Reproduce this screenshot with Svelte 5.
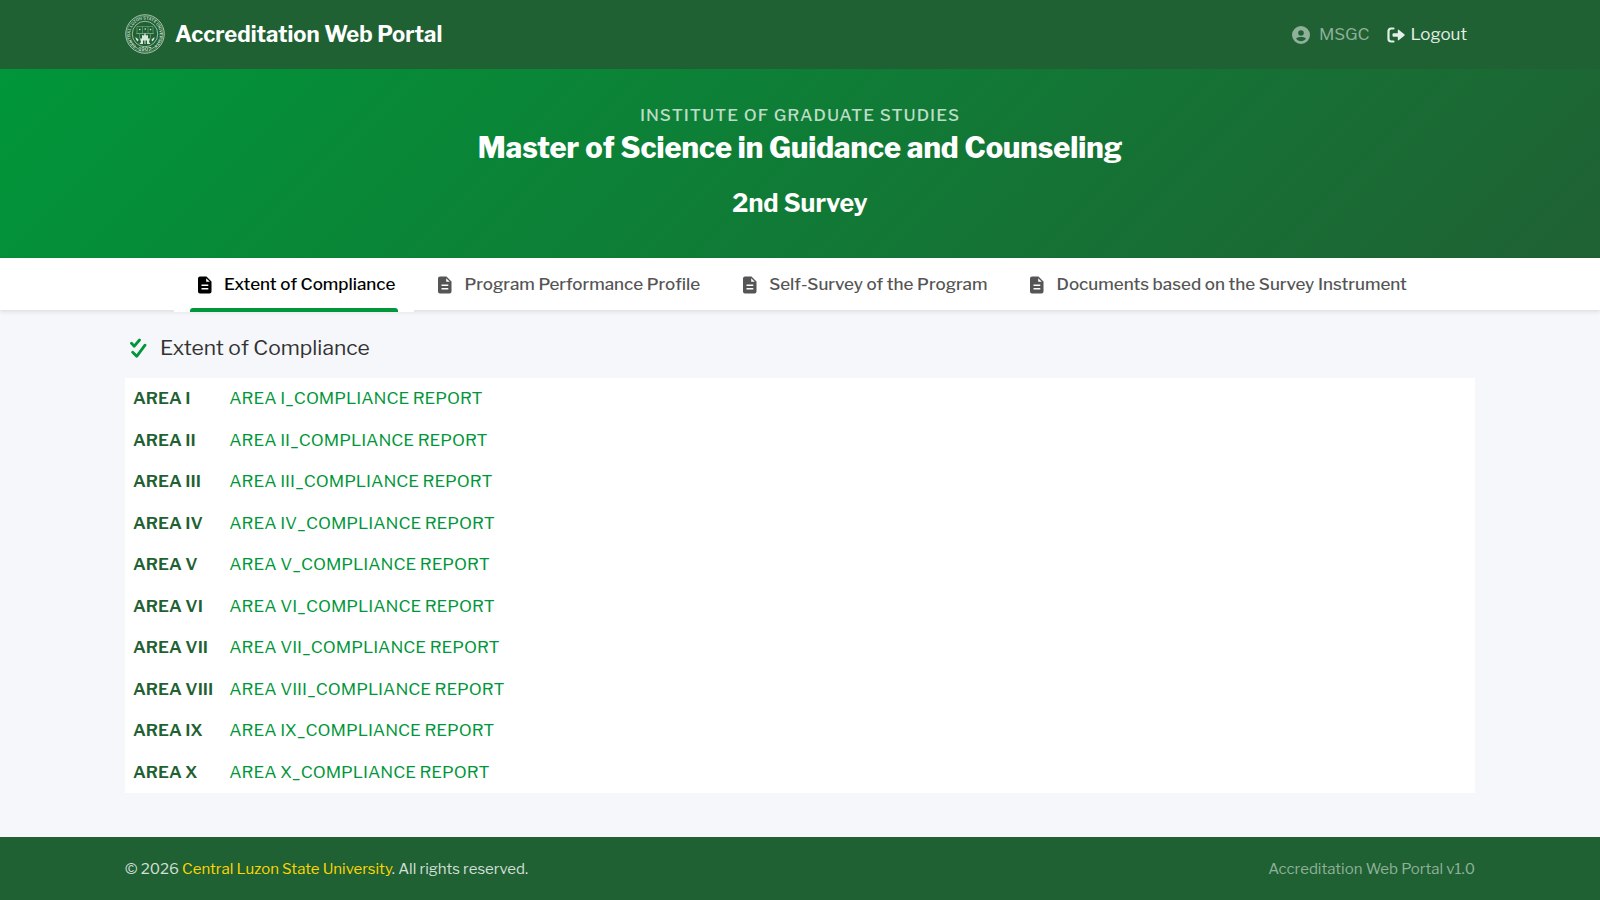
<script>
  const tabs = [
    'Extent of Compliance',
    'Program Performance Profile',
    'Self-Survey of the Program',
    'Documents based on the Survey Instrument'
  ];
  const areas = ['I', 'II', 'III', 'IV', 'V', 'VI', 'VII', 'VIII', 'IX', 'X'];
  let active = $state(0);
</script>

<div class="page">
  <header class="topbar">
    <div class="container bar">
      <a class="brand" href="#home">
        <svg class="seal" viewBox="0 0 80 80" aria-hidden="true">
          <defs>
            <path id="seal-ring" d="M20.500 62.500A29.500 29.500 0 1 1 59.500 62.500" />
          </defs>
          <g fill="none" stroke="#b5d0bc">
            <circle cx="40" cy="40" r="38.500" stroke-width="1.800" />
            <circle cx="40" cy="40" r="36" stroke-width=".8" />
            <circle cx="40" cy="40" r="25.500" stroke-width="1.600" />
            <path d="M11 54a32 32 0 0 0 18 17M69 54a32 32 0 0 1-18 17" stroke-width="1.600" />
          </g>
          <path d="M24 25h32v14H24zM35 25v14M46 25v14M22 39h36M29 39v10M51 39v10" fill="none" stroke="#8fb59a" stroke-width="1" />
          <text class="ring"><textPath href="#seal-ring" startOffset="50%" text-anchor="middle">CENTRAL LUZON STATE UNIVERSITY</textPath></text>
          <g fill="#d8e8dc">
            <path d="M40 37l2 6 4-1v7h4l-2 7 3 4H29l3-4-2-7h4v-7l4 1z" />
            <circle cx="29.500" cy="31" r="1.600" /><circle cx="40.500" cy="30" r="1.600" /><circle cx="51" cy="31" r="1.600" />
            <path d="M21 46l6 5-1 4c-3-2-5-5-5-9zM59 46l-6 5 1 4c3-2 5-5 5-9z" />
          </g>
          <path d="M36 60v-7h3v7zM41 60v-7h3v7z" fill="#1f6133" />
          <text class="year" x="40" y="74" text-anchor="middle">1907</text>
        </svg>
        <span>Accreditation Web Portal</span>
      </a>
      <nav class="account" aria-label="Account">
        <span class="user">
          <svg viewBox="0 0 18 18" width="18" height="18" aria-hidden="true">
            <path fill="currentColor" fill-rule="evenodd" d="M9 0a9 9 0 1 1 0 18A9 9 0 0 1 9 0zM9 4.200a2.800 2.800 0 1 0 0 5.600 2.800 2.800 0 0 0 0-5.600zM4.100 12.600C5.200 14.400 7 15.300 9 15.300s3.800-.9 4.900-2.700C12.600 11.400 10.900 11 9 11s-3.600.4-4.900 1.600z" />
          </svg>
          MSGC
        </span>
        <a class="logout" href="#logout">
          <svg viewBox="0 0 18 16" width="18" height="16" aria-hidden="true">
            <path d="M6.500 1.500H4.200Q1.500 1.500 1.500 4.200v7.600q0 2.700 2.700 2.700h2.300" fill="none" stroke="currentColor" stroke-width="2.200" stroke-linecap="round" />
            <path d="M6.500 6.200h4.300V3.400q0-1.500 1.200-.5l5.300 4.400q.8.700 0 1.400L12 13.100q-1.200 1-1.200-.5V9.800H6.500Q5.500 9.800 5.500 8.800V7.200q0-1 1-1z" fill="currentColor" />
          </svg>
          Logout
        </a>
      </nav>
    </div>
  </header>

  <section class="hero">
    <p>INSTITUTE OF GRADUATE STUDIES</p>
    <h1>Master of Science in Guidance and Counseling</h1>
    <h2>2nd Survey</h2>
  </section>

  <nav class="tabs" aria-label="Survey sections">
    {#each tabs as tab, i}
      <button type="button" class:active={active === i} onclick={() => (active = i)}>
        <svg viewBox="0 0 14 18" width="14" height="18" aria-hidden="true">
          <path fill="currentColor" fill-rule="evenodd" d="M2 .5h6.500L13.500 5.500V15.500a2 2 0 0 1-2 2H2a2 2 0 0 1-2-2V2.500a2 2 0 0 1 2-2zM8.200 2.200V5.800h3.600zM3.500 8.500v1.600h6.800V8.500zM3.500 12v1.600h6.800V12z" />
        </svg>
        {tab}
      </button>
    {/each}
  </nav>

  <main class="container">
    <h3>
      <svg viewBox="0 0 18 20" width="18" height="20" aria-hidden="true">
        <path d="M1.500 5.300l2.800 2.900L9.500 2M2.700 14.300l4 4L15 7.200" fill="none" stroke="currentColor" stroke-width="2.800" stroke-linecap="round" stroke-linejoin="round" />
      </svg>
      Extent of Compliance
    </h3>
    <table>
      <tbody>
        {#each areas as area}
          <tr>
            <th scope="row">AREA {area}</th>
            <td><a href={`#area-${area.toLowerCase()}`}>AREA {area}_COMPLIANCE REPORT</a></td>
          </tr>
        {/each}
      </tbody>
    </table>
  </main>

  <footer>
    <div class="container bar">
      <span>© 2026 <a href="#clsu">Central Luzon State University</a>. All rights reserved.</span>
      <span class="version">Accreditation Web Portal v1.0</span>
    </div>
  </footer>
</div>

<style>
  :global(body) {
    margin: 0;
  }
  .page {
    min-height: 100vh;
    display: flex;
    flex-direction: column;
    background: #f5f7fb;
    color: #333;
    font: 17px/1.5 'Libre Franklin', Inter, sans-serif;
  }
  a {
    color: inherit;
    text-decoration: none;
  }
  svg {
    flex: none;
  }
  .container {
    box-sizing: border-box;
    width: 100%;
    max-width: 1374px;
    margin: 0 auto;
    padding: 0 12px;
  }
  .bar {
    display: flex;
    align-items: center;
    justify-content: space-between;
  }
  .topbar {
    padding: 14px 0 15px;
    background: #1f6133;
  }
  .brand {
    display: flex;
    align-items: center;
    gap: 10px;
    color: #fff;
    font-size: 22px;
    font-weight: 700;
    line-height: 40px;
  }
  .seal {
    width: 40px;
    height: 40px;
  }
  .seal text {
    font-weight: 600;
    fill: #c4dbca;
  }
  .seal .ring {
    font-size: 8px;
  }
  .seal .year {
    font-size: 10px;
  }
  .account {
    display: flex;
    gap: 17px;
    padding: 1px 8px 0 0;
  }
  .user,
  .logout {
    display: flex;
    align-items: center;
  }
  .user {
    gap: 9px;
    color: #8fb099;
  }
  .logout {
    gap: 6px;
    color: #e4efe7;
  }
  .hero {
    display: flex;
    flex-direction: column;
    align-items: center;
    padding: 33px 12px 35px;
    background: linear-gradient(135deg, #009639, #1f6133);
    color: #fff;
    text-align: center;
  }
  .hero p {
    margin: 0;
    color: #bddcc6;
    font-weight: 500;
    line-height: 26px;
    letter-spacing: 1px;
  }
  .hero h1 {
    margin: 0 0 16px;
    font-size: 29px;
    line-height: 40px;
    font-weight: 800;
  }
  .hero h2 {
    margin: 0;
    font-size: 25px;
    line-height: 39px;
    font-weight: 700;
  }
  .tabs {
    display: flex;
    justify-content: center;
    background: #fff;
    box-shadow: 0 2px 4px #0000001a;
  }
  .tabs button {
    position: relative;
    display: flex;
    align-items: center;
    gap: 12px;
    height: 54px;
    margin-bottom: -2px;
    padding: 0 19px 0 24px;
    border: 0;
    background: transparent;
    color: #555;
    font: inherit;
    font-weight: 500;
    white-space: nowrap;
  }
  .tabs .active {
    background: #fff;
    color: #000;
  }
  .tabs .active::after {
    position: absolute;
    right: 16px;
    bottom: 0;
    left: 16px;
    height: 4px;
    border-radius: 3px 3px 0 0;
    background: #009639;
    content: '';
  }
  main {
    flex: 1;
  }
  h3 {
    display: flex;
    align-items: center;
    gap: 12px;
    margin: 0;
    padding: 21px 5px 13px;
    font-size: 21px;
    line-height: 34px;
    font-weight: 400;
  }
  h3 svg,
  td {
    color: #009639;
  }
  table {
    width: 100%;
    border-collapse: collapse;
    background: #fff;
  }
  th,
  td {
    padding: 8px;
    text-align: left;
  }
  th {
    width: 1px;
    color: #1f6133;
    font-weight: 600;
    white-space: nowrap;
  }
  footer {
    padding: 20px 0 19px;
    background: #1f6133;
    color: #d2dfd6;
    font-size: 15px;
    line-height: 24px;
  }
  footer a {
    color: #ffd600;
  }
  .version {
    color: #8fb099;
  }
</style>
